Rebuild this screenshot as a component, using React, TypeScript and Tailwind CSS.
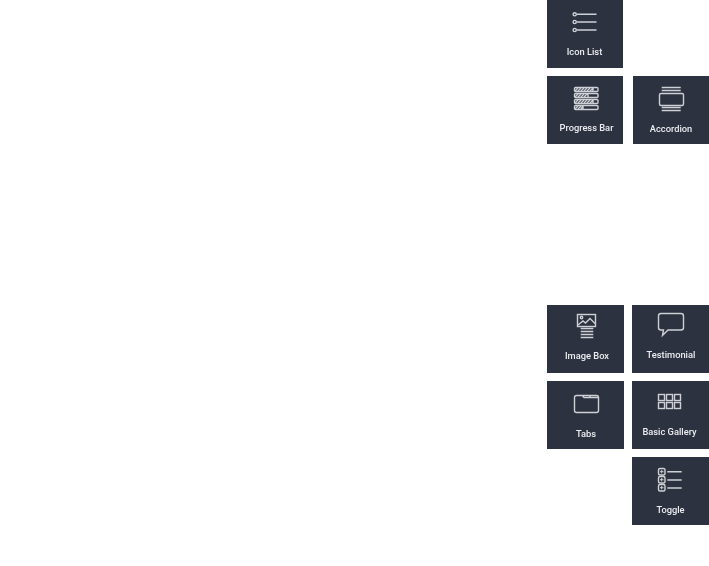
import type { ReactNode } from "react";

function Tile({ label, labelClass, wide, children }: { label: string; labelClass: string; wide?: boolean; children: ReactNode }) {
  return (
    <div className={`flex h-[68px] flex-col items-center bg-[#2d3240] pt-[6px] ${wide ? "w-[77px]" : "w-[76px]"}`}>
      <svg width="40" height="36" viewBox="0 0 40 36" fill="none" stroke="#cdd0d4" strokeWidth="1.4" className="ml-[18px] self-start blur-[0.45px]">
        {children}
      </svg>
      <span className={`h-[12px] text-[9.3px] leading-[12px] font-medium text-[#eceef0] blur-[0.4px] ${labelClass}`}>{label}</span>
    </div>
  );
}

export default function App() {
  return (
    <div className="flex h-[566px] w-full flex-col items-end overflow-hidden bg-white font-['Roboto',sans-serif]">
      {/* first group */}
      <div className="flex w-[162px] flex-col gap-[8px]">
        <div className="flex">
          <Tile label="Icon List" labelClass="mt-[4px] mr-[1px]">
            <circle cx="9.7" cy="8.3" r="1.6" />
            <circle cx="9.7" cy="16" r="1.6" />
            <circle cx="9.7" cy="24" r="1.6" />
            <path d="M12 8.3h19.5M12 16h19.5M12 24h19.5" />
          </Tile>
        </div>
        <div className="flex justify-between">
          <Tile label="Progress Bar" labelClass="mt-[4px] ml-[3px]">
            <rect x="9.5" y="5.5" width="23.5" height="4" rx="1" />
            <rect x="9.5" y="11.5" width="23.5" height="4" rx="1" />
            <rect x="9.5" y="17.5" width="23.5" height="4" rx="1" />
            <rect x="9.5" y="23.5" width="23.5" height="4" rx="1" />
            <path d="M10 9l3-3M13 9l3-3M16 9l3-3M19 9l3-3M22 9l3-3M25 9l3-3M28 5.5v4" />
            <path d="M10 15l3-3M13 15l3-3M16 15l3-3M19 15l3-3M23 11.5v4" />
            <path d="M10 21l3-3M13 21l3-3M16 21l3-3M19 21l3-3M22 21l3-3M25 21l3-3M28 17.5v4" />
            <path d="M10 27l3-3M13 27l3-3M16 27l2-3M18 23.5v4" />
          </Tile>
          <Tile label="Accordion" labelClass="mt-[5px]">
            <rect x="8.5" y="11.5" width="24" height="12" rx="1.5" />
            <path d="M10.7 5.5h19M10.7 8.5h19M10.7 25.5h19M10.7 28.5h19" />
          </Tile>
        </div>
      </div>

      {/* second group */}
      <div className="mt-[161px] flex w-[162px] flex-col gap-[8px]">
        <div className="flex justify-between">
          <Tile wide label="Image Box" labelClass="mt-[3px] ml-[3px]">
            <rect x="12.5" y="3.5" width="18" height="12" />
            <circle cx="16.5" cy="6.5" r="1.2" />
            <path d="M13 14l5-4 2.5 2 4.5-4.5 5 5" />
            <path d="M15.7 17.5h12.6M15.7 20.5h12.6M15.7 23.5h12.6M15.7 26.5h12.6" />
          </Tile>
          <Tile wide label="Testimonial" labelClass="mt-[2px] ml-[1px]">
            <path d="M11 2.5h20a2.5 2.5 0 0 1 2.5 2.5v11.5a2.5 2.5 0 0 1-2.5 2.5H18l-5.5 5.5 1-5.5H11a2.5 2.5 0 0 1-2.5-2.5V5A2.5 2.5 0 0 1 11 2.5z" />
          </Tile>
        </div>
        <div className="flex justify-between">
          <Tile wide label="Tabs" labelClass="mt-[5px] ml-[1px]">
            <path d="M11.5 8.5h20a2 2 0 0 1 2 2v13a2 2 0 0 1-2 2h-20a2 2 0 0 1-2-2v-13a2 2 0 0 1 2-2z" />
            <path d="M17.5 8.5l1.5 2h14M25 8.5v2" />
          </Tile>
          <Tile wide label="Basic Gallery" labelClass="mt-[3px] mr-[2px]">
            <rect x="8.5" y="7.5" width="6" height="6" />
            <rect x="16.5" y="7.5" width="6" height="6" />
            <rect x="24.5" y="7.5" width="6" height="6" />
            <rect x="8.5" y="15.5" width="6" height="6" />
            <rect x="16.5" y="15.5" width="6" height="6" />
            <rect x="24.5" y="15.5" width="6" height="6" />
          </Tile>
        </div>
        <div className="flex justify-end">
          <Tile wide label="Toggle" labelClass="mt-[5px]">
            <rect x="8.5" y="5.5" width="6.5" height="6.5" rx="1.5" />
            <rect x="8.5" y="13.5" width="6.5" height="6.5" rx="1.5" />
            <rect x="8.5" y="21.5" width="6.5" height="6.5" rx="1.5" />
            <path d="M10 8.7h3.5M11.7 7v3.4M10 16.7h3.5M11.7 15v3.4M10 24.7h3.5M11.7 23v3.4" strokeWidth="1" />
            <path d="M17.3 8.7h14.4M17.3 17h14.4M17.3 25h14.4" />
          </Tile>
        </div>
      </div>
    </div>
  );
}
